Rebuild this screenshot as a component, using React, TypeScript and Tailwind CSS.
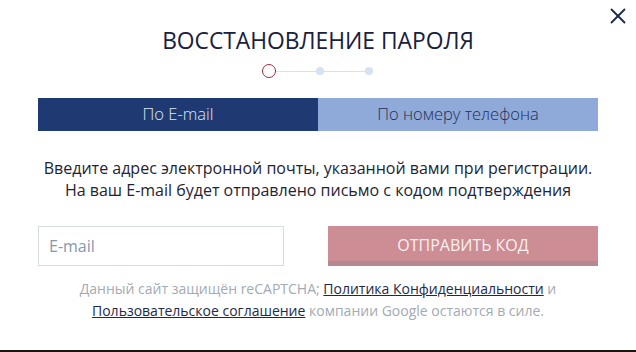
import { X } from 'lucide-react'

export default function App() {
  return (
    <div
      className="relative flex h-[352px] w-[636px] flex-col overflow-hidden bg-white"
      style={{ fontFamily: '"Open Sans", "Noto Sans", sans-serif' }}
    >
      {/* закрыть */}
      <button className="absolute right-[5px] top-[3px] text-[#1c2a4a]">
        <X size={26} strokeWidth={1.7} />
      </button>

      <div className="flex flex-1 flex-col px-[38px]">
        <h1 className="mt-[26px] text-center text-[22.8px] leading-[30px] font-normal text-[#17213d]">
          ВОССТАНОВЛЕНИЕ ПАРОЛЯ
        </h1>

        {/* шаги */}
        <div className="mt-[8px] flex items-center justify-center pr-[2px]">
          <span className="h-[14px] w-[14px] rounded-full border-[1.5px] border-[#a8273b] bg-white" />
          <span className="h-px w-[40px] bg-[#d5e3f0]" />
          <span className="h-[8px] w-[8px] rounded-full bg-[#d5e3f0]" />
          <span className="h-px w-[41px] bg-[#d5e3f0]" />
          <span className="h-[8px] w-[8px] rounded-full bg-[#d5e3f0]" />
        </div>

        {/* вкладки */}
        <div className="mt-[20px] grid h-[33px] grid-cols-2">
          <button className="bg-[#1f3a73] text-[16.5px] font-light text-[#dfe6f2]">По E-mail</button>
          <button className="bg-[#8faad9] text-[16.5px] font-light text-[#1f2f55]">По номеру телефона</button>
        </div>

        <p className="mt-[26px] text-center text-[16px] leading-[22px] text-[#1e2433]">
          Введите адрес электронной почты, указанной вами при регистрации.
          <br />
          На ваш E-mail будет отправлено письмо с кодом подтверждения
        </p>

        <div className="mt-[25px] flex gap-[44px]">
          <input
            placeholder="E-mail"
            className="h-[40px] w-[246px] border border-[#d6dde2] px-[10px] text-[16px] text-[#1e2433] outline-none placeholder:text-[#8497b0]"
          />
          <button className="h-[40px] flex-1 border-b-[5px] border-[#b48a90] bg-[#cd8d95] pt-[3px] text-[16px] uppercase text-[#fbf0f1]">
            Отправить код
          </button>
        </div>

        <p className="mt-[12px] text-center text-[14px] leading-[22px] text-[#a3aab3]">
          Данный сайт защищён reCAPTCHA;{' '}
          <a className="text-[#1c2a4a] underline">Политика Конфиденциальности</a> и
          <br />
          <a className="text-[#1c2a4a] underline">Пользовательское соглашение</a> компании Google остаются в силе.
        </p>
      </div>

      <div className="h-[2px] w-full bg-[#1a1410]" />
    </div>
  )
}
